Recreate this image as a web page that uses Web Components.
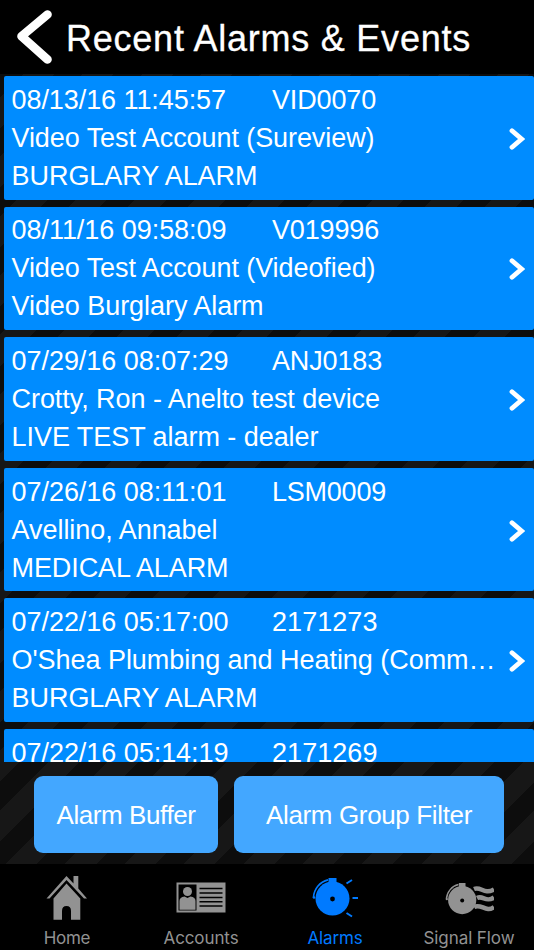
<!DOCTYPE html>
<html lang="en"><head><meta charset="utf-8"><title>Recent Alarms &amp; Events</title>
<style>html,body{margin:0;background:#000}</style></head><body>
<alarm-app></alarm-app>
<script>
const define = (name, html, ready) => customElements.define(name, class extends HTMLElement {
  connectedCallback() {
    if (this.shadowRoot) return;
    const t = document.createElement('template');
    t.innerHTML = typeof html === 'function' ? html(this) : html;
    this.attachShadow({ mode: 'open' }).append(t.content.cloneNode(true));
    if (ready) ready(this);
  }
});

/* Tracks its text out or in so that the line has the advance width given in "w". */
define('fit-text', `<style>:host{display:block;white-space:pre}span{display:inline-block;white-space:pre}</style><span><slot></slot></span>`, el => {
  const s = el.shadowRoot.querySelector('span'), w = +el.getAttribute('w');
  if (!w) return;
  const n = [...el.textContent].length;
  s.style.letterSpacing = ((w - s.getBoundingClientRect().width) / n) + 'px';
});

define('title-bar', `<style>
:host{display:flex;align-items:center;height:74px;background:#000;color:#fff;font-size:36px;line-height:42px;padding:0 0 0 16px;box-sizing:border-box}
svg{width:38px;height:56px;flex:none;margin-right:12px}
.t{padding-top:3px;-webkit-text-stroke:.3px #fff}
</style><svg viewBox="0 0 38 56"><path d="M31.5 5.5 5.500 27.300 31.500 50.500" fill="none" stroke="#fff" stroke-width="8.600" stroke-linecap="round" stroke-linejoin="round"/></svg><div class="t"><slot></slot></div>`);

define('alarm-row', `<style>
:host{display:grid;grid-template-columns:1fr 30px;align-items:center;height:123.5px;flex:none;box-sizing:border-box;background:#008cff;border-radius:2px;color:#fff;font-size:27px;line-height:38px;padding-left:7.5px}
.t{min-width:0}.h{display:grid;grid-template-columns:260.5px 1fr}
svg{width:16px;height:24px;margin-top:2px;margin-left:5px}
</style><div class="t"><div class="h"><slot name="date"></slot><slot name="id"></slot></div><slot name="who"></slot><slot name="kind"></slot></div>
<svg viewBox="0 0 16 24"><path d="M3 3.700 12.600 12 3 20.300" fill="none" stroke="#fff" stroke-width="4.800" stroke-linecap="round" stroke-linejoin="miter"/></svg>`);

define('big-button', `<style>:host{display:flex;align-items:center;justify-content:center;height:76.5px;box-sizing:border-box;background:#43a7ff;color:#fff;border-radius:9px;font-size:26px;line-height:38px;padding-top:1px}</style><slot></slot>`);

define('tab-item', `<style>
:host{display:flex;flex-direction:column;align-items:center;color:#929292;font:17px/22px Inter,"Liberation Sans",sans-serif}
:host([active]){color:#007aff}
.i{height:63px}.i ::slotted(svg){display:block}
</style><div class="i"><slot name="icon"></slot></div><slot></slot>`);

const rows = [
 ['08/13/16 11:45:57',214.5,'VID0070',104,'Video Test Account (Sureview)',363,'BURGLARY ALARM',246],
 ['08/11/16 09:58:09',215,'V019996',107,'Video Test Account (Videofied)',364,'Video Burglary Alarm',252],
 ['07/29/16 08:07:29',217,'ANJ0183',110,'Crotty, Ron - Anelto test device',368.5,'LIVE TEST alarm - dealer',307],
 ['07/26/16 08:11:01',215,'LSM0009',114,'Avellino, Annabel',206,'MEDICAL ALARM',217],
 ['07/22/16 05:17:00',217,'2171273',105.5,"O'Shea Plumbing and Heating (Comm…",484,'BURGLARY ALARM',246],
 ['07/22/16 05:14:19',217,'2171269',105.5,'',0,'',0]];
const bell = `<circle cx="19.5" cy="20.5" r="17"/><path d="M15.5 0h8v6h-8z"/><path d="M.5 19.5A19 19 0 0 1 15 1.8" fill="none" stroke="currentColor" stroke-width="1.7"/><circle cx="1" cy="19.5" r="1.3"/><circle cx="19.5" cy="21" r="2.4" fill="#000"/>`;

define('alarm-app', () => `<style>
:host{display:flex;flex-direction:column;width:534px;height:950px;overflow:hidden;font-family:"Liberation Sans",Arial,sans-serif;background:#000}
main{height:790px;display:flex;flex-direction:column;background:repeating-linear-gradient(135deg,#0d0d0d 0 16.5px,#171717 16.5px 38.5px,#0d0d0d 38.5px 42px)}
.list{box-sizing:border-box;height:688px;padding:2px 0 0 4px;display:flex;flex-direction:column;gap:7.1px;overflow:hidden}
.actions{display:grid;grid-template-columns:184px 270px;gap:16px;padding:14px 0 0 34px}
nav{height:86px;display:grid;grid-template-columns:repeat(4,134px);background:#000}
svg{fill:currentColor}
</style>
<title-bar><fit-text w="405">Recent Alarms &amp; Events</fit-text></title-bar>
<main><div class="list">${rows.map(r => `<alarm-row>${['date','id','who','kind'].map((s,i)=>r[i*2]?`<fit-text slot="${s}" w="${r[i*2+1]}">${r[i*2]}</fit-text>`:`<div slot="${s}" style="height:38px"></div>`).join('')}</alarm-row>`).join('')}</div>
<div class="actions"><big-button><fit-text w="139">Alarm Buffer</fit-text></big-button><big-button><fit-text w="206">Alarm Group Filter</fit-text></big-button></div></main>
<nav>
<tab-item><svg slot="icon" width="42" height="62" viewBox="45.5 864 42 62"><path d="M46 898.500 66 876 73 883.500V876h4.800v12.500L86.500 898.500H83.500L66 880 49 898.500Z"/><path d="M66 883.500 79.800 898.500V919.800H70.500V911Q70.500 906 66 906T61.500 911V919.800H53V898.500Z"/></svg><fit-text w="46.500">Home</fit-text></tab-item>
<tab-item><svg slot="icon" width="50" height="62" viewBox="176.500 864 50 62"><path d="M177 882.500h49v30h-49z"/><path d="M179 884.500h18v26h-18z" fill="#000"/><circle cx="188" cy="891.500" r="4.500"/><path d="M180 909.800V901Q180 897 185 896.500L188 898 191 896.500Q196 897 196 901V909.800Z"/><path d="M200 888.500h23M200 893h23M200 897.500h23M200 901.800h23M200 906h23" stroke="#000" stroke-width="1.500"/></svg><fit-text w="75">Accounts</fit-text></tab-item>
<tab-item active><svg slot="icon" width="46" height="62" viewBox="-1 -14 46 62">${bell}<path d="M33.500 5.500 39 2M39.500 20h6.500M33.500 35l5.500 3.500" stroke="currentColor" stroke-width="2"/></svg><fit-text w="55">Alarms</fit-text></tab-item>
<tab-item><svg slot="icon" width="49" height="62" viewBox="445 864 49 62"><g transform="translate(446 883) scale(.83)">${bell}</g><path d="M474 889C481 886 484 895 494 889.500M477 898C483 895 486 903 494 897.500M474 907C481 903 486 913 494 907" fill="none" stroke="currentColor" stroke-width="4.600"/></svg><fit-text w="91">Signal Flow</fit-text></tab-item>
</nav>`);
</script></body></html>
